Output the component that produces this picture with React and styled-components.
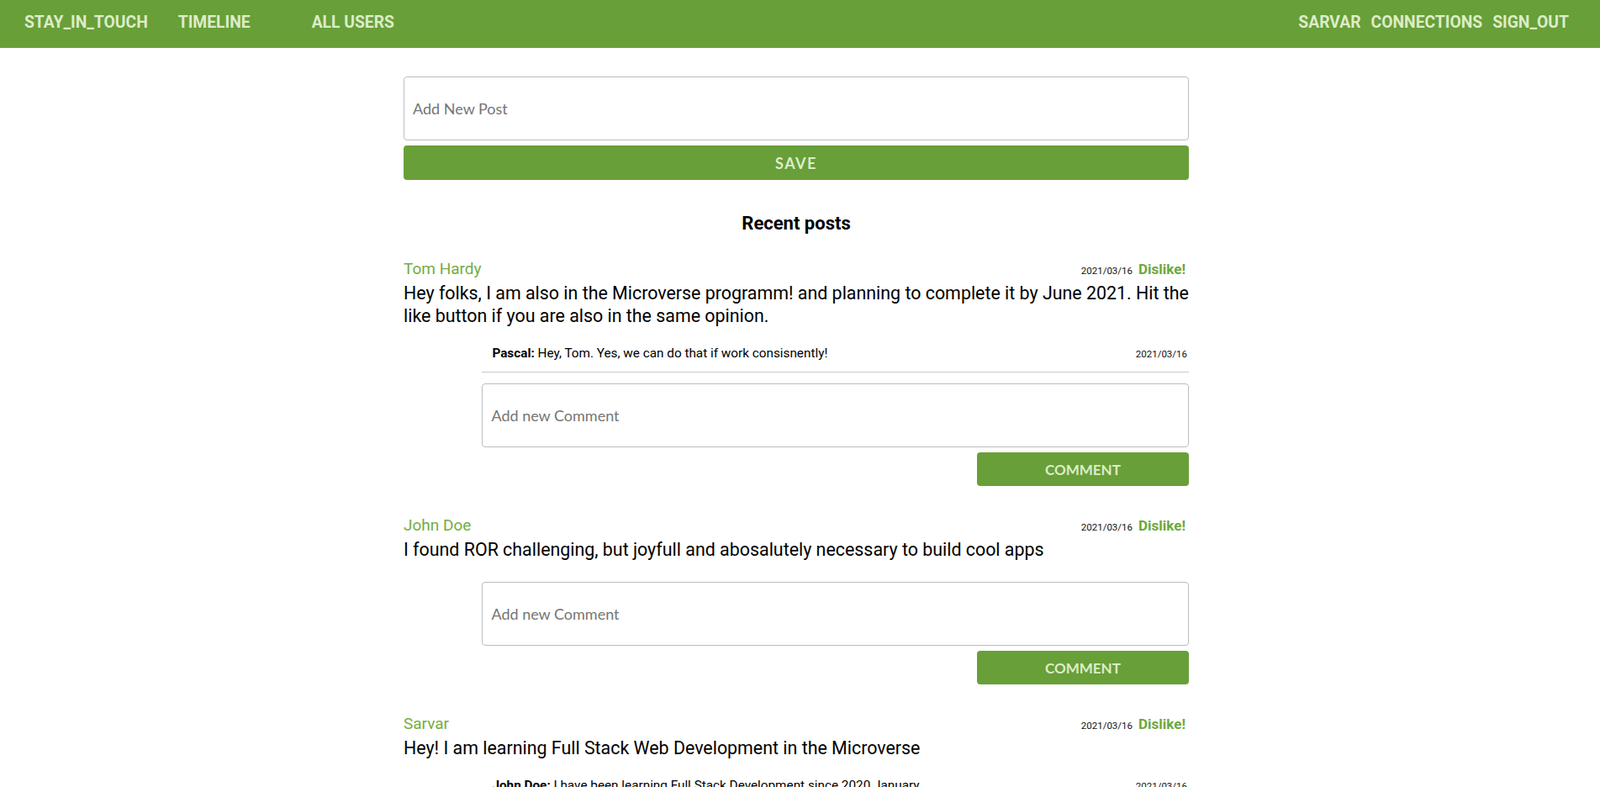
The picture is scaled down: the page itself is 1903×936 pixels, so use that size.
import React from 'react';
import styled, { createGlobalStyle } from 'styled-components';

const GlobalStyle = createGlobalStyle`
  html::-webkit-scrollbar {
    width: 3px;
    background: #c4c4c4;
  }
  html::-webkit-scrollbar-thumb {
    background: #c4c4c4;
  }
  body {
    margin: 0;
    font-family: Roboto, 'Liberation Sans', sans-serif;
    color: #000;
    background: #fff;
  }
`;

const Nav = styled.nav`
  height: 57px;
  box-sizing: border-box;
  background: #689f38;
  display: flex;
  align-items: center;
  justify-content: space-between;
  padding: 0 37px 4px 29px;
`;

const NavGroup = styled.div`
  display: flex;
  align-items: center;
`;

const NavLink = styled.a`
  color: #dcedc8;
  font-size: 19.3px;
  font-weight: 700;
  text-decoration: none;
  margin-left: ${(props) => props.$gap || 0}px;
`;

const Main = styled.main`
  display: flex;
  justify-content: center;
  padding: 34px 9px 60px 0;
`;

const Column = styled.div`
  width: 934px;
`;

const TextInput = styled.input`
  display: block;
  width: 100%;
  height: 76px;
  box-sizing: border-box;
  border: 1px solid #bdbdbd;
  border-radius: 4px;
  padding: 0 10px;
  font-family: Lato, 'Open Sans', sans-serif;
  font-size: 18px;
  color: #333;
  outline: none;

  &::placeholder {
    color: #757575;
  }
`;

const GreenButton = styled.button`
  display: block;
  width: ${(props) => props.$width || '100%'};
  margin: 6px 0 0 auto;
  height: ${(props) => props.$height || 40}px;
  border: none;
  border-radius: 4px;
  background: #689f38;
  color: #dcedc8;
  font-family: Lato, 'Open Sans', sans-serif;
  font-size: ${(props) => props.$size || 17}px;
  letter-spacing: ${(props) => props.$spacing || 0}px;
  font-weight: 700;
  cursor: pointer;
`;

const Title = styled.h2`
  margin: 40px 0 0;
  text-align: center;
  font-size: 22px;
  line-height: 24px;
  font-weight: 700;
`;

const PostList = styled.div`
  margin-top: 31px;
  display: flex;
  flex-direction: column;
  gap: 36px;
`;

const PostHeader = styled.div`
  display: flex;
  justify-content: space-between;
  align-items: baseline;
  line-height: 22px;
`;

const Author = styled.a`
  color: #74ad3e;
  font-size: 19px;
  text-decoration: none;
`;

const Meta = styled.div`
  display: flex;
  align-items: baseline;
  gap: 7px;
  padding-right: 4px;
`;

const DateText = styled.span`
  font-size: 11.5px;
  color: #111;
`;

const Dislike = styled.a`
  color: #6ca83c;
  font-size: 17px;
  font-weight: 700;
  text-decoration: none;
`;

const Body = styled.p`
  margin: 2px 0 0;
  font-size: 21.4px;
  line-height: 27px;
  color: #000;
`;

const Comments = styled.div`
  display: flex;
  flex-direction: column;
  width: 90%;
  margin: 12px 0 0 auto;
`;

const CommentRow = styled.div`
  display: flex;
  justify-content: space-between;
  align-items: baseline;
  padding: 9px 2px 11px 12px;
  border-bottom: 1px solid #c8c8c8;
  font-size: 15.3px;
  line-height: 20px;
`;

const CommentForm = styled.form`
  margin-top: 13px;
`;

const posts = [
  {
    author: 'Tom Hardy',
    date: '2021/03/16',
    text: 'Hey folks, I am also in the Microverse programm! and planning to complete it by June 2021. Hit the like button if you are also in the same opinion.',
    comments: [{ author: 'Pascal', text: 'Hey, Tom. Yes, we can do that if work consisnently!', date: '2021/03/16' }],
  },
  {
    author: 'John Doe',
    date: '2021/03/16',
    text: 'I found ROR challenging, but joyfull and abosalutely necessary to build cool apps',
    comments: [],
  },
  {
    author: 'Sarvar',
    date: '2021/03/16',
    text: 'Hey! I am learning Full Stack Web Development in the Microverse',
    comments: [{ author: 'John Doe', text: 'I have been learning Full Stack Development since 2020 January', date: '2021/03/16' }],
  },
];

const Post = ({ post }) => (
  <article>
    <PostHeader>
      <Author href="#">{post.author}</Author>
      <Meta>
        <DateText>{post.date}</DateText>
        <Dislike href="#">Dislike!</Dislike>
      </Meta>
    </PostHeader>
    <Body>{post.text}</Body>
    <Comments>
      {post.comments.map((c, i) => (
        <CommentRow key={i}>
          <span>
            <b>{c.author}:</b> {c.text}
          </span>
          <DateText>{c.date}</DateText>
        </CommentRow>
      ))}
      <CommentForm onSubmit={(e) => e.preventDefault()}>
        <TextInput placeholder="Add new Comment" />
        <GreenButton $width="30%">COMMENT</GreenButton>
      </CommentForm>
    </Comments>
  </article>
);

const App = () => {
  return (
    <>
      <GlobalStyle />
      <Nav>
        <NavGroup>
          <NavLink href="#">STAY_IN_TOUCH</NavLink>
          <NavLink href="#" $gap={36}>TIMELINE</NavLink>
          <NavLink href="#" $gap={73}>ALL USERS</NavLink>
        </NavGroup>
        <NavGroup>
          <NavLink href="#">SARVAR</NavLink>
          <NavLink href="#" $gap={12}>CONNECTIONS</NavLink>
          <NavLink href="#" $gap={12}>SIGN_OUT</NavLink>
        </NavGroup>
      </Nav>
      <Main>
        <Column>
          <form onSubmit={(e) => e.preventDefault()}>
            <TextInput placeholder="Add New Post" />
            <GreenButton $height={41} $size={18} $spacing={1.5}>SAVE</GreenButton>
          </form>
          <Title>Recent posts</Title>
          <PostList>
            {posts.map((p, i) => (
              <Post key={i} post={p} />
            ))}
          </PostList>
        </Column>
      </Main>
    </>
  );
};

export default App;
